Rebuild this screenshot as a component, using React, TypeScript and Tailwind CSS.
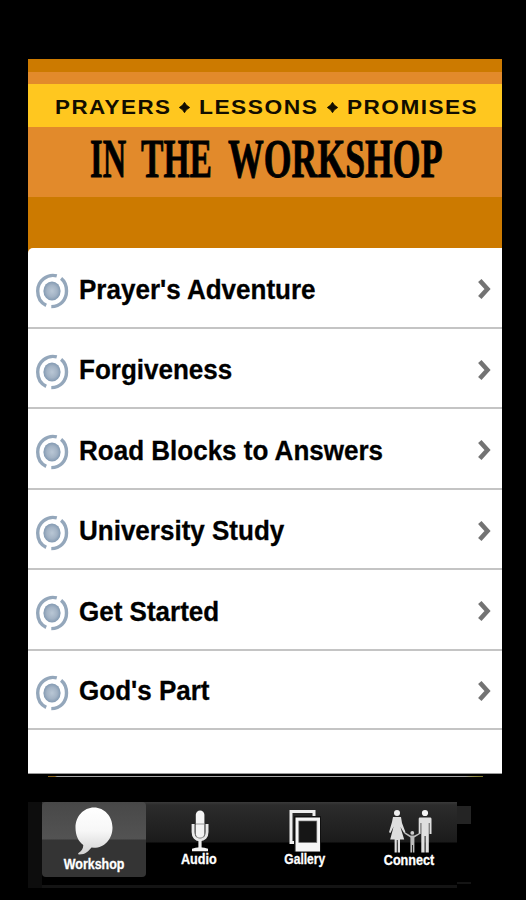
import React from "react";

const rows = [
  { label: "Prayer's Adventure", height: "h-[80.5px]" },
  { label: "Forgiveness", height: "h-[80.5px]" },
  { label: "Road Blocks to Answers", height: "h-[80.5px]" },
  { label: "University Study", height: "h-[80.5px]" },
  { label: "Get Started", height: "h-[80.5px]" },
  { label: "God's Part", height: "h-[79px] pb-0" },
];

function TargetIcon() {
  return (
    <svg className="h-9 w-[34px] shrink-0 translate-y-[1px]" viewBox="0 0 34 36" fill="none">
      <defs>
        <radialGradient id="core">
          <stop offset="0" stopColor="#b9c7d5" />
          <stop offset="0.6" stopColor="#a3b3c5" />
          <stop offset="1" stopColor="#8299b1" />
        </radialGradient>
      </defs>
      <ellipse cx="17" cy="18" rx="8.6" ry="9.6" fill="url(#core)" />
      <path d="M21.8 2.9C12.5 0.5 2.7 7.4 2.7 18C2.7 24.6 5.8 29.8 11.2 32.4" stroke="#94a7bb" strokeWidth="3.4" />
      <path d="M26.1 5.4C29.8 8.4 31.5 12.8 31.5 18C31.5 26.7 25.4 33.6 16.3 33.6" stroke="#94a7bb" strokeWidth="3.4" />
    </svg>
  );
}

function Chevron() {
  return (
    <svg className="h-[22px] w-4 shrink-0" viewBox="0 0 16 22" fill="none">
      <path d="M2.8 2.5L10.5 11L2.8 19.5" stroke="#737373" strokeWidth="4.6" />
    </svg>
  );
}

function Diamond() {
  return (
    <svg className="h-[11px] w-[11px] shrink-0" viewBox="0 0 11 11">
      <path d="M5.5 0.3Q6.9 3.6 10.7 5.5Q6.9 7.4 5.5 10.7Q4.1 7.4 0.3 5.5Q4.1 3.6 5.5 0.3Z" stroke="#120d00" strokeWidth="0.8" fill="#120d00" />
    </svg>
  );
}

function Bubble() {
  return (
    <svg className="h-12 w-10" viewBox="0 0 40 48">
      <defs>
        <linearGradient id="bubble" x1="0" y1="0" x2="0" y2="1">
          <stop offset="0" stopColor="#fff" />
          <stop offset="0.5" stopColor="#f7f7f7" />
          <stop offset="1" stopColor="#d2d2d2" />
        </linearGradient>
      </defs>
      <path
        d="M20 0.5C30.5 0.5 38.5 9.5 38.5 20.5C38.5 32 30.5 40.8 20 40.8L17.5 40.5C14.5 44 12 47.5 5 47.5C4 47.5 3.8 46.5 4.8 45.8C7.8 43.7 9.2 41.5 9.3 38C4.2 34.5 1.5 28 1.5 20.5C1.5 9.5 9.5 0.5 20 0.5Z"
        fill="url(#bubble)"
      />
    </svg>
  );
}

function Microphone() {
  return (
    <svg className="h-[42px] w-5" viewBox="0 0 20 42" fill="none">
      <rect x="5.8" y="0.5" width="8.6" height="28" rx="4.3" fill="#f4f4f4" />
      <path d="M5.8 14H14.4" stroke="#999" strokeWidth="1" />
      <path d="M3.1 14V22C3.1 27 6 29.8 10 29.8C14 29.8 17 27 17 22V14" stroke="#e8e8e8" strokeWidth="3" />
      <path d="M5.2 15V22C5.2 26 7 28 10 28C13 28 14.9 26 14.9 22V15" stroke="#888" strokeWidth="0.9" />
      <path d="M10 30V38" stroke="#eee" strokeWidth="3.2" />
      <path d="M2 41.2V38.8Q5 37.3 10 37.3Q15 37.3 18 38.8V41.2Z" fill="#f4f4f4" />
    </svg>
  );
}

function Photos() {
  return (
    <svg className="h-[42px] w-8" viewBox="0 0 32 42" fill="none">
      <rect x="2" y="1.5" width="23" height="31" stroke="#eee" strokeWidth="3" />
      <rect x="5" y="6" width="27" height="36" fill="#111" />
      <rect x="6.5" y="7.5" width="24.5" height="34" fill="#f7f7f7" />
      <rect x="9.8" y="11" width="18" height="21.5" fill="#161616" stroke="#777" strokeWidth="0.7" />
    </svg>
  );
}

function Family() {
  return (
    <svg className="h-11 w-11" viewBox="0 0 44 44" fill="none">
      <circle cx="9" cy="4" r="3" fill="#eee" />
      <path d="M5 8H13L14 14L17.4 23L16.2 24.2L12.4 18L16.2 30.5H12V43.5H9.7V31H8.8V43.5H6.6V30.5H2.2L5.6 17.5L2.5 24L1 23.2L4 13Z" fill="#dedede" />
      <circle cx="37" cy="4" r="3.1" fill="#f5f5f5" />
      <path d="M31.5 8.5H42.5Q43.5 8.5 43.5 10V25H41.5V14H40.8V43.5H37.6V27H36.6V43.5H33.3V14H32.6V25H30.7V10Q30.7 8.5 31.5 8.5Z" fill="#dfdfdf" />
      <circle cx="24.3" cy="23.9" r="1.9" fill="#ccc" />
      <path d="M17 23.3L22.5 26.6H26.3L31.5 24L32 25L26.4 28.4V43.5H24.8V36H24V43.5H22.4V28.4L16.3 24.5Z" fill="#bcbcbc" />
    </svg>
  );
}

export default function App() {
  return (
    <div className="h-[900px] w-[526px] overflow-hidden bg-black pt-[58.5px] font-['Liberation_Sans',Arial,sans-serif]">
      <main className="ml-[28px] w-[473.5px]">
        <header className="h-[189.5px] whitespace-nowrap bg-[#cc7a00] pt-[13.5px] text-black">
          <div className="h-3 bg-[#e28a2b]" />
          <div className="flex h-[43px] items-center bg-[#ffc71f] pl-[27px] pt-[3px] text-[20px] font-bold leading-none tracking-[1.3px] text-[#120d00]">
            <span className="w-[124px] origin-left scale-x-[1.12]">PRAYERS</span>
            <Diamond />
            <span className="ml-[9px] w-[128px] origin-left scale-x-[1.14]">LESSONS</span>
            <Diamond />
            <span className="ml-[9px] w-[135px] origin-left scale-x-[1.13]">PROMISES</span>
          </div>
          <div className="flex h-[69.5px] items-center bg-[#e28a2b] pb-[7px] pl-[62px] font-['Liberation_Serif',serif] text-[55px] font-bold leading-none [-webkit-text-stroke:0.9px_black]">
            <span className="w-[51px] origin-left scale-x-[0.59]">IN</span>
            <span className="w-[87px] origin-left scale-x-[0.61]">THE</span>
            <span className="w-[220px] origin-left scale-x-[0.65]">WORKSHOP</span>
          </div>
        </header>

        <div className="bg-[linear-gradient(#cc7a00_5px,#fff_5px)]">
          <section className="h-[525.5px] rounded-tl-[5px] border-b border-[#9a9a9a] bg-white">
            {rows.map((row) => (
              <div key={row.label} className={`flex items-center border-b-2 border-[#c4c4c4] pl-[7px] pr-[9px] pt-[6px] ${row.height}`}>
                <TargetIcon />
                <span className="ml-[10px] flex-1 origin-left -translate-y-[1px] scale-x-[0.946] whitespace-nowrap text-[27.5px] font-bold leading-none text-black [-webkit-text-stroke:0.3px_black]">
                  {row.label}
                </span>
                <div className="-translate-y-[1px]">
                  <Chevron />
                </div>
              </div>
            ))}
          </section>
        </div>
        <div className="ml-5 mt-[2px] h-[1.5px] w-[435px] bg-[linear-gradient(90deg,#8b651d_0px,#8b651d_7px,#a7a7a7_9px,#a7a7a7_417px,#9b9552_425px,#7d7728_435px)]" />
      </main>

      <nav className="ml-[28px] mt-[24.5px] flex h-[86px] text-white [-webkit-text-stroke:0.3px_white]">
        <div className="w-[14px] bg-[#0d0d0d]" />
        <div className="flex w-[415px] border-b-[3px] border-[#141414] bg-[linear-gradient(#3a3a3a_0px,#2c2c2c_3px,#1b1b1b_40px,#000_41px)]">
          <div className="flex h-[75px] w-[104px] flex-col items-center rounded-[4px] bg-[linear-gradient(#484848_0px,#535353_37px,#343434_38px,#343434_75px)] pt-[5.5px]">
            <Bubble />
            <span className="mt-[2px] scale-x-[0.89] text-[14px] font-bold leading-none">Workshop</span>
          </div>
          <div className="flex w-[107px] flex-col items-center pt-[8.5px]">
            <Microphone />
            <span className="-ml-[2px] scale-x-[0.9] text-[14px] font-bold leading-none">Audio</span>
          </div>
          <div className="flex w-[103px] flex-col items-center pt-[8.5px]">
            <Photos />
            <span className="scale-x-[0.86] text-[14px] font-bold leading-none">Gallery</span>
          </div>
          <div className="flex w-[101px] flex-col items-center pl-[7px] pt-[7px]">
            <Family />
            <span className="-ml-[2px] scale-x-[0.9] text-[14px] font-bold leading-none">Connect</span>
          </div>
        </div>
        <div className="flex w-[14px] flex-col justify-between pb-[4px] pt-[4px]">
          <div className="h-[18px] bg-[#242424]" />
          <div className="h-[2px] bg-[#141414]" />
        </div>
      </nav>
    </div>
  );
}
